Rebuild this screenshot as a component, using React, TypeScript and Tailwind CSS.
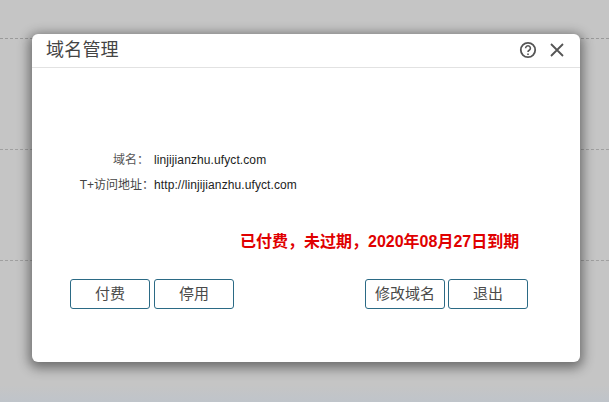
export default function App() {
  const font = "font-['Liberation_Sans','Noto_Sans_CJK_SC',sans-serif]";
  const btn =
    "w-20 h-[30px] rounded-[3px] border border-[#2b6a85] bg-white text-[15px] leading-none text-[#4a4a4a] flex items-center justify-center pb-[1px]";
  return (
    <div className={`relative w-[609px] h-[402px] overflow-hidden bg-[linear-gradient(#c5c5c5_0,#c5c5c5_385px,#bfc4ca_402px)] ${font}`}>
      <div className="flex flex-col pt-[38px] gap-[110px]">
        <div className="border-t border-dashed border-[#9a9a9a]" />
        <div className="border-t border-dashed border-[#a0a0a0]" />
        <div className="border-t border-dashed border-[#a0a0a0]" />
      </div>
      <div className="absolute left-8 top-[34px] w-[548px] h-[328px] rounded-[6px] bg-white shadow-[0_3px_12px_3px_rgba(0,0,0,0.45)] flex flex-col">
        <div className="h-[34px] shrink-0 border-b border-[#e2e2e2] flex items-center pl-[14px] pr-[15px]">
          <span className="text-[18px] leading-none text-[#444444] mt-[-2px] tracking-[0.2px]">域名管理</span>
          <div className="ml-auto flex items-center gap-[12px] mt-[-2px]">
            <svg width="18" height="18" viewBox="0 0 18 18" fill="none" stroke="#555555">
              <circle cx="9" cy="9" r="7.2" strokeWidth="1.8" />
              <path d="M6.6 7.2a2.4 2.4 0 1 1 3.6 2.1c-.8.5-1.2.9-1.2 1.8" strokeWidth="1.6" />
              <path d="M9 12.4v1.5" strokeWidth="1.6" />
            </svg>
            <svg width="16" height="16" viewBox="0 0 16 16" fill="none" stroke="#555555" strokeWidth="1.8">
              <path d="M2 2l12 12M14 2L2 14" />
            </svg>
          </div>
        </div>
        <div className="flex flex-col gap-[9px] pt-[84px] text-[12px] leading-[16px] text-[#222222]">
          <div className="flex">
            <div className="w-[122px] pr-[5px] text-right text-[#555555]">域名：</div>
            <div className="tracking-[0.1px]">linjijianzhu.ufyct.com</div>
          </div>
          <div className="flex">
            <div className="w-[122px] text-right text-[#444444] whitespace-nowrap">T+访问地址：</div>
            <div className="tracking-[0.1px]">http://linjijianzhu.ufyct.com</div>
          </div>
        </div>
        <div className="mt-[39px] pl-[208px] text-[16px] leading-[20px] font-bold text-[#e00000] whitespace-nowrap">
          已付费，未过期，2020年08月27日到期
        </div>
        <div className="mt-[27px] flex pl-[38px] pr-[52px]">
          <div className="flex gap-1">
            <button className={btn}>付费</button>
            <button className={btn}>停用</button>
          </div>
          <div className="ml-auto flex gap-[3px]">
            <button className={btn}>修改域名</button>
            <button className={btn}>退出</button>
          </div>
        </div>
      </div>
    </div>
  );
}
